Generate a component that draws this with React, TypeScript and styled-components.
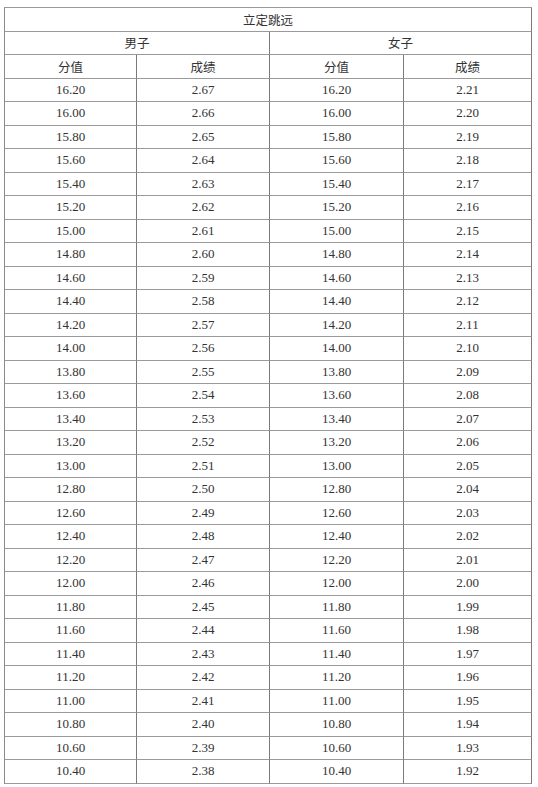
import React from 'react'
import styled, { createGlobalStyle } from 'styled-components'

const GlobalStyle = createGlobalStyle`
  html, body {
    margin: 0;
    padding: 0;
    background: #fff;
  }
  body {
    font-family: 'Liberation Serif', 'Noto Sans CJK SC', serif;
  }
`

const Page = styled.div`
  padding: 7px 0 0 4px;
`

const Table = styled.div`
  display: grid;
  grid-template-columns: 132px 133px 134px 128px;
  width: max-content;
  border-top: 1px solid #9a9a9a;
  border-left: 1px solid #8a8a8a;
`

const Cell = styled.div<{ $span?: number }>`
  grid-column: span ${p => p.$span || 1};
  box-sizing: border-box;
  height: 23.5px;
  display: flex;
  align-items: center;
  justify-content: center;
  border-right: 1px solid #7a7a7a;
  border-bottom: 1px solid #9a9a9a;
  font-size: 13px;
  color: #333;
  white-space: nowrap;
`

const HeadText = styled.span`
  font-family: 'Noto Sans CJK SC', sans-serif;
  font-size: 12.5px;
  color: #333;
`

// score steps from 16.20 down to 10.40
const scores = Array.from({ length: 30 }, (_, i) => (16.2 - i * 0.2).toFixed(2))
const boys = Array.from({ length: 30 }, (_, i) => (2.67 - i * 0.01).toFixed(2))
const girls = Array.from({ length: 30 }, (_, i) => (2.21 - i * 0.01).toFixed(2))

const App: React.FC = () => {
  return (
    <Page>
      <GlobalStyle />
      <Table>
        <Cell $span={4}><HeadText>立定跳远</HeadText></Cell>
        <Cell $span={2}><HeadText>男子</HeadText></Cell>
        <Cell $span={2}><HeadText>女子</HeadText></Cell>
        <Cell><HeadText>分值</HeadText></Cell>
        <Cell><HeadText>成绩</HeadText></Cell>
        <Cell><HeadText>分值</HeadText></Cell>
        <Cell><HeadText>成绩</HeadText></Cell>
        {scores.map((s, i) => (
          <React.Fragment key={s}>
            <Cell>{s}</Cell>
            <Cell>{boys[i]}</Cell>
            <Cell>{s}</Cell>
            <Cell>{girls[i]}</Cell>
          </React.Fragment>
        ))}
      </Table>
    </Page>
  )
}

export default App
